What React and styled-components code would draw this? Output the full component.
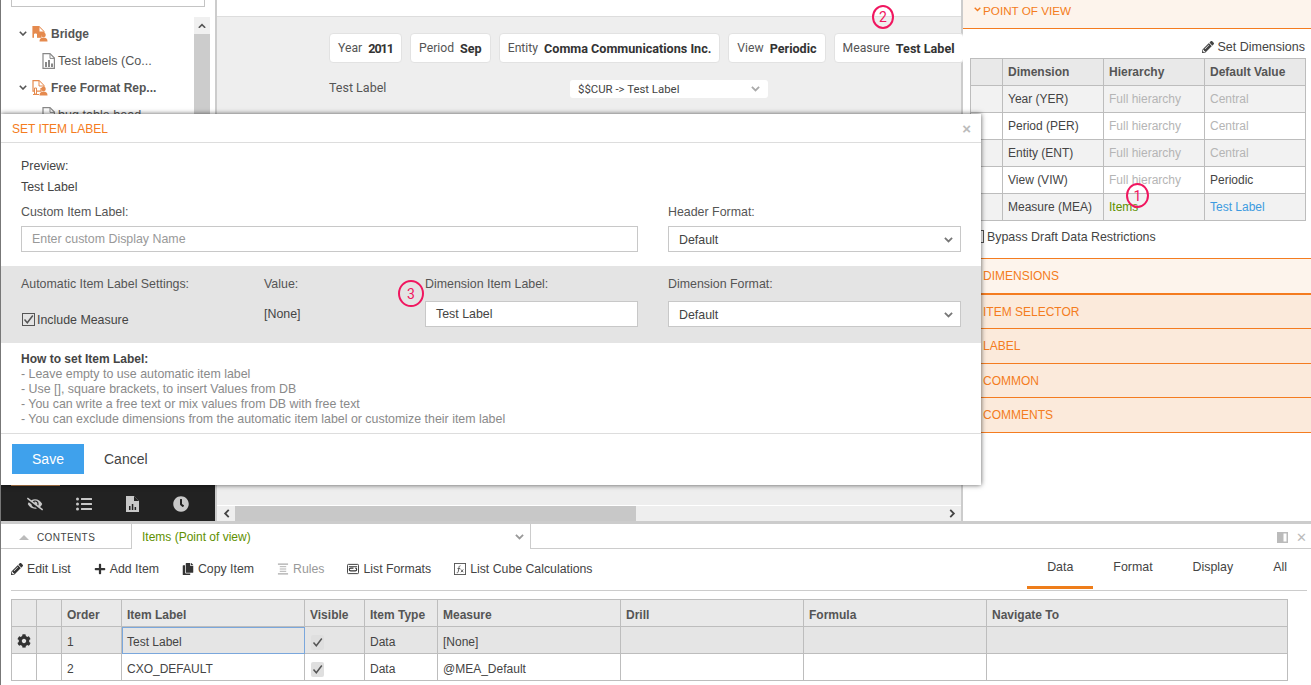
import React from "react";
import styled, { createGlobalStyle } from "styled-components";
import {
    FaPencilAlt,
    FaPlus,
    FaCopy,
    FaCog,
    FaEyeSlash,
    FaListUl,
    FaClock,
} from "react-icons/fa";

/* theme tokens */
const orange = "#f47c20";
const line = "#bdbdbd";
const ink = "#444";
const sans = `"Liberation Sans", Arial, sans-serif`;

const Global = createGlobalStyle`
    html, body {
        margin: 0;
        padding: 0;
        height: 100%;
        overflow: hidden;
        background: #fff;
    }
    * { box-sizing: border-box; }
    body {
        font-family: ${sans};
        font-size: 12.4px;
        color: ${ink};
    }
`;

const Page = styled.div`
    position: relative;
    width: 1311px;
    height: 685px;
    overflow: hidden;
    border-left: 1px solid #777;
    display: flex;
    flex-direction: column;
`;

const TopArea = styled.div`
    display: grid;
    grid-template-columns: 216px 746px 1fr;
    height: 521px;
`;

/* left tree */
const Sidebar = styled.aside`
    display: flex;
    flex-direction: column;
    border-right: 2px solid #ccc;
    background: #fff;
`;

const SearchBox = styled.div`
    height: 7px;
    margin: 0 10px 13px 10px;
    width: 194px;
    border: 1px solid #c4c4c4;
    border-top: none;
`;

const TreeWrap = styled.div`
    flex: 1;
    display: grid;
    grid-template-columns: 1fr 16px;
    padding-right: 5px;
    min-height: 0;
`;

const Tree = styled.div`
    display: flex;
    flex-direction: column;
`;

const TreeRow = styled.div`
    height: 27px;
    display: flex;
    align-items: center;
    gap: 3px;
    padding-left: ${(p) => (p.$child ? "41px" : "15px")};
    font-size: ${(p) => (p.$child ? "12.6px" : "12px")};
    font-weight: ${(p) => (p.$child ? 400 : 700)};
    color: #555;
    white-space: nowrap;
`;

const Caret = styled.span`
    width: 13px;
    display: inline-flex;
    justify-content: center;
`;

const VScroll = styled.div`
    display: flex;
    flex-direction: column;
    background: #ccc;
    margin-top: -3px;
`;

const ScrollBtn = styled.div`
    height: 17px;
    background: #f0f0f0;
    display: flex;
    align-items: center;
    justify-content: center;
`;

const IconBar = styled.div`
    height: 37px;
    background: #222;
    display: grid;
    grid-template-columns: repeat(4, 48.5px);
    padding-left: 10px;
    align-items: center;
    color: #c8c8c8;
    font-size: 16px;
    margin-bottom: -1px;
`;

const IconCell = styled.div`
    height: 100%;
    display: flex;
    align-items: center;
    justify-content: center;
    border-top: 1px solid ${(p) => (p.$active ? "#c98a52" : "transparent")};
`;

/* center canvas */
const Canvas = styled.main`
    display: flex;
    flex-direction: column;
    background: #eee;
    border-right: 2px solid #ccc;
    font-family: Roboto, sans-serif;
`;

const CanvasTop = styled.div`
    height: 17px;
    background: #fff;
    border-bottom: 1px solid #ddd;
`;

const Chips = styled.div`
    display: flex;
    gap: 8px;
    padding: 16px 0 0 112px;
`;

const Chip = styled.div`
    height: 30px;
    padding: 0 8px 0 8px;
    display: flex;
    flex: none;
    align-items: center;
    gap: 6px;
    background: #fff;
    border: 1px solid #e2e2e2;
    border-radius: 4px;
    font-size: 12.2px;
    color: #555;
    white-space: nowrap;
    b {
        font-weight: 700;
        font-size: 12.6px;
        color: #333;
        letter-spacing: ${(p) => (p.$tight ? "-1px" : "0")};
    }
`;

const SelectRow = styled.div`
    display: grid;
    grid-template-columns: 241px 198px;
    padding: 17px 0 0 112px;
    flex: 1;
    align-content: start;
    font-size: 12.5px;
    color: #555;
`;

const MiniSelect = styled.div`
    height: 18px;
    background: #fff;
    border-radius: 3px;
    padding: 0 8px 0 8px;
    display: flex;
    align-items: center;
    justify-content: space-between;
    font-size: 11.4px;
    color: #444;
`;

const HScroll = styled.div`
    height: 16px;
    margin-top: 2px;
    border-top: 1px solid #fff;
    display: grid;
    grid-template-columns: 18px 401px 1fr 18px;
    align-items: center;
    justify-items: center;
`;

const Thumb = styled.div`
    width: 100%;
    height: 100%;
    background: #c8c8c8;
`;

/* right properties */
const Props = styled.aside`
    display: flex;
    flex-direction: column;
    background: #fff;
`;

const PanelHead = styled.div`
    height: 29px;
    padding: 3px 0 0 11px;
    display: flex;
    align-items: flex-start;
    gap: 2px;
    background: #fdf4ec;
    border-bottom: 1px solid ${orange};
    color: ${orange};
    font-size: 11.7px;
    line-height: 15px;
    svg {
        margin-top: 4px;
    }
`;

const SetDims = styled.div`
    display: flex;
    justify-content: flex-end;
    align-items: center;
    gap: 3px;
    height: 15px;
    margin-top: 10px;
    padding-right: 6px;
    font-size: 12.5px;
    color: #444;
    svg {
        font-size: 12px;
    }
`;

const PovTable = styled.table`
    border-collapse: collapse;
    table-layout: fixed;
    width: 335px;
    margin: 4px 0 0 7px;
    td,
    th {
        height: 27px;
        border: 1px solid ${line};
        padding: 0 0 0 5px;
        text-align: left;
        font-size: 12px;
        font-weight: 400;
        white-space: nowrap;
    }
    th {
        background: #e9e9e9;
        font-weight: 700;
        color: #555;
    }
    tbody tr:nth-child(odd) td {
        background: #f2f2f2;
    }
`;

const Muted = styled.span`
    color: ${(p) => p.$color || "#b5b5b5"};
`;

const Bypass = styled.label`
    display: flex;
    align-items: center;
    gap: 3px;
    margin: 8px 0 14px 8px;
    height: 15px;
`;

const CheckBox = styled.span`
    width: 13px;
    height: 13px;
    flex: none;
    border: 1px solid #555;
    background: ${(p) => p.$bg || "#fff"};
    display: inline-flex;
    align-items: center;
    justify-content: center;
    color: #555;
`;

const Accordion = styled.div`
    height: ${(p) => p.$h}px;
    padding-left: 20px;
    display: flex;
    align-items: center;
    font-size: 12px;
    background: ${(p) => (p.$light ? "#fdf4ec" : "#fbeadb")};
    border-top: ${(p) => (p.$first ? `1px solid ${orange}` : "none")};
    border-bottom: ${(p) => (p.$thick ? 2 : 1)}px solid ${orange};
    color: ${orange};
`;

/* bottom list */
const Splitter = styled.div`
    height: 3px;
    background: #ccc;
`;

const Tabs = styled.div`
    height: 25px;
    display: flex;
    border-bottom: 1px solid #ccc;
`;

const ContentsTab = styled.div`
    width: 131px;
    height: 25px;
    padding: 2px 0 0 18px;
    display: flex;
    align-items: center;
    gap: 8px;
    font-size: 10px;
    letter-spacing: 0.4px;
    color: #444;
    border-right: 1px solid #ccc;
    border-bottom: 1px solid #ccc;
`;

const Triangle = styled.span`
    width: 0;
    height: 0;
    border-left: 5px solid transparent;
    border-right: 5px solid transparent;
    border-bottom: 5px solid #bbb;
`;

const ItemsTab = styled.div`
    width: 399px;
    height: 25px;
    padding: 1px 6px 0 10px;
    display: flex;
    align-items: center;
    justify-content: space-between;
    background: #fff;
    color: #5f9000;
    font-size: 12px;
    border-right: 1px solid #ccc;
`;

const TabTools = styled.div`
    margin-left: auto;
    display: flex;
    align-items: center;
    gap: 8px;
    padding: 3px 4px 0 0;
    color: #bbb;
    font-size: 13px;
`;

const Toolbar = styled.div`
    height: 42px;
    margin: 0 4px 0 10px;
    display: flex;
    justify-content: space-between;
    border-bottom: 1px solid #ccc;
`;

const Tools = styled.div`
    display: flex;
    align-items: center;
    gap: 23px;
    padding-bottom: 2px;
`;

const Tool = styled.div`
    display: flex;
    align-items: center;
    gap: 4px;
    font-size: 12.3px;
    color: ${(p) => (p.$disabled ? "#999" : "#444")};
    white-space: nowrap;
    svg {
        width: 12px;
        height: 12px;
        color: ${(p) => (p.$disabled ? "#aaa" : "#333")};
    }
`;

const ViewTabs = styled.div`
    display: flex;
    height: 41px;
`;

const ViewTab = styled.div`
    padding: 0 20px 2px 20px;
    display: flex;
    align-items: center;
    color: #444;
    border-bottom: 3px solid ${(p) => (p.$active ? "#ee7d1a" : "transparent")};
    margin-bottom: 1px;
`;

const ItemsTable = styled.table`
    border-collapse: collapse;
    table-layout: fixed;
    width: 1276px;
    margin: 8px 0 0 10px;
    th,
    td {
        height: 27px;
        border: 1px solid ${line};
        padding: 4px 0 0 5px;
        text-align: left;
        font-size: 12px;
        font-weight: 400;
        white-space: nowrap;
    }
    th {
        background: #e9e9e9;
        color: #555;
        font-weight: 700;
    }
    tbody tr:first-child td {
        background: #e5e5e5;
    }
`;

const Focused = styled.td`
    && {
        outline: 1px solid #7aa7dc;
        outline-offset: -1px;
    }
`;

const GreyTick = styled.span`
    width: 13px;
    height: 15px;
    margin-left: 1px;
    display: inline-flex;
    align-items: center;
    justify-content: center;
    background: #dfdfdf;
    border-radius: 2px;
    vertical-align: middle;
`;

/* modal */
const Modal = styled.section`
    position: absolute;
    z-index: 5;
    left: 0;
    top: 114px;
    width: 980px;
    height: 371px;
    background: #fff;
    box-shadow: 0 0 5px rgba(0, 0, 0, 0.65);
    display: flex;
    flex-direction: column;
`;

const ModalHead = styled.header`
    height: 29px;
    padding: 1px 10px 0 11px;
    display: flex;
    align-items: center;
    justify-content: space-between;
    border-bottom: 1px solid #ddd;
    font-size: 12px;
    color: ${orange};
`;

const CloseX = styled.span`
    color: #bbb;
    font-size: 15px;
    font-weight: 700;
`;

const Preview = styled.div`
    padding: 16px 20px 0;
    display: flex;
    flex-direction: column;
    gap: 6px;
    line-height: 15px;
`;

const FormRow = styled.div`
    display: grid;
    grid-template-columns: 617px 293px;
    column-gap: 30px;
    padding: ${(p) => (p.$band ? "11px 20px 16px" : "10px 20px 14px")};
    background: ${(p) => (p.$band ? "#e4e4e4" : "transparent")};
`;

const BandCols = styled.div`
    display: grid;
    grid-template-columns: 243px 161px 213px;
`;

const Field = styled.div`
    display: flex;
    flex-direction: column;
`;

const Label = styled.div`
    height: 15px;
    line-height: 15px;
    margin-bottom: ${(p) => p.$gap ?? 6}px;
    color: #555;
`;

const Input = styled.div`
    height: 26px;
    border: 1px solid #c8c8c8;
    background: #fff;
    padding-left: 10px;
    display: flex;
    align-items: center;
    color: ${(p) => (p.$placeholder ? "#999" : "#444")};
`;

const Select = styled(Input)`
    justify-content: space-between;
    padding: 2px 7px 0 10px;
`;

const IncludeRow = styled.div`
    display: flex;
    align-items: center;
    gap: 2px;
    height: 15px;
    margin: 20px 0 0 1px;
`;

const PlainValue = styled.div`
    height: 15px;
    line-height: 15px;
    margin-top: 15px;
`;

const Help = styled.div`
    flex: 1;
    padding: 9px 20px 0;
    line-height: 15px;
    color: #8a8a8a;
    b {
        color: #444;
        font-size: 12px;
    }
`;

const ModalFoot = styled.footer`
    height: 52px;
    border-top: 1px solid #ddd;
    padding: 10px 11px;
    display: flex;
    align-items: flex-start;
    gap: 20px;
`;

const SaveBtn = styled.button`
    width: 72px;
    height: 30px;
    border: none;
    background: #3fa1ec;
    color: #fff;
    font: 14px ${sans};
`;

const CancelBtn = styled.button`
    height: 30px;
    border: none;
    padding: 0;
    background: transparent;
    color: #444;
    font: 14px ${sans};
`;

/* numbered call-outs lying over the screen */
const Callout = styled.span`
    position: absolute;
    z-index: 6;
    left: ${(p) => p.$x}px;
    top: ${(p) => p.$y}px;
    width: ${(p) => p.$w}px;
    height: ${(p) => p.$h}px;
    border: 2px solid #f0165f;
    border-radius: 50%;
    display: flex;
    align-items: center;
    justify-content: center;
    color: #f0165f;
    font: 14px Roboto, sans-serif;
`;

const Chevron = ({ size = 8, color = "#666", up }) => (
    <svg width={size} height={size * 0.7} viewBox="0 0 10 7">
        <path
            d={up ? "M1 6l4-4 4 4" : "M1 1l4 4 4-4"}
            fill="none"
            stroke={color}
            strokeWidth="2"
        />
    </svg>
);

const SideArrow = ({ left }) => (
    <svg width="7" height="9" viewBox="0 0 7 10">
        <path
            d={left ? "M6 1L2 5l4 4" : "M1 1l4 4-4 4"}
            fill="none"
            stroke="#444"
            strokeWidth="2"
        />
    </svg>
);

const Tick = () => (
    <svg width="11" height="11" viewBox="0 0 11 11">
        <path d="M1.500 5.500l2.800 3.200L9.800 1.500" fill="none" stroke="#555" strokeWidth="1.500" />
    </svg>
);

const ReportIcon = ({ solid }) => (
    <svg width="16" height="16" viewBox="0 0 16 16">
        <path
            d="M1 .7h6l5 5v3H9v2.500H1z"
            fill={solid ? "#e58a4e" : "none"}
            stroke="#e58a4e"
            strokeWidth="1.200"
        />
        <path d="M7 1v5h5" fill="#fff" stroke="#e58a4e" />
        <path
            d="M2.500 8h2v6h-2zM1 14.500h6"
            fill="#fff"
            stroke={solid ? "#fff" : "#e58a4e"}
        />
        <circle cx="11.500" cy="9" r="2.300" fill="#e58a4e" />
        <path d="M7.500 15.500c0-3 1.600-4 4-4s4 1 4 4z" fill="#e58a4e" />
    </svg>
);

const DocIcon = () => (
    <svg width="13" height="16" viewBox="0 0 13 16">
        <path d="M1 .6h7l4.400 4.400v10.400H1z" fill="#fff" stroke="#888" strokeWidth="1.200" />
        <path d="M8 1v4.400h4" fill="none" stroke="#888" />
        <path d="M3 9h2v5H3zM6 7h2v7H6zM9 10.500h2V14H9z" fill="#888" />
    </svg>
);

const BarDoc = () => (
    <svg width="13" height="16" viewBox="0 0 13 16">
        <path d="M0 0h8l5 5v11H0z" fill="#c8c8c8" />
        <path d="M8 0v5h5z" fill="#222" />
        <path d="M3 10h1.500v4H3zM5.800 8h1.500v6H5.800zM8.600 11h1.500v3H8.600z" fill="#222" />
    </svg>
);

const RulesIcon = () => (
    <svg viewBox="0 0 13 12" fill="none" stroke="#aaa">
        <path d="M1 .7h11M1 11.300h11" strokeWidth="1.400" />
        <path d="M3 3.500h7M3 6h7M3 8.500h7" />
    </svg>
);

const FormatsIcon = () => (
    <svg viewBox="0 0 13 11" fill="none" stroke="#333">
        <rect x=".5" y=".5" width="12" height="10" rx="1" />
        <path d="M2 3h9" />
        <path d="M7 4.500H4a1.500 1.500 0 000 3h5a1.500 1.500 0 000-3" strokeWidth="1.200" />
    </svg>
);

const FxIcon = () => (
    <svg viewBox="0 0 13 13" fill="none" stroke="#555">
        <rect x=".5" y=".5" width="12" height="12" />
        <path d="M7 3C5.500 3 5.500 4 5.200 6L4.600 9.500C4.400 10.500 3.800 10.500 3 10.500M3.800 6h3M7.500 7l2.500 3M10 7l-2.500 3" />
    </svg>
);

const PanelIcon = () => (
    <svg width="11" height="11" viewBox="0 0 11 11">
        <rect width="11" height="11" fill="#bbb" />
        <rect x="6.500" y="1.500" width="3" height="8" fill="#fff" />
    </svg>
);

const povRows = [
    ["Year (YER)", "Central"],
    ["Period (PER)", "Central"],
    ["Entity (ENT)", "Central"],
    ["View (VIW)", "Periodic"],
];

const tools = [
    { label: "Edit List", icon: <FaPencilAlt /> },
    { label: "Add Item", icon: <FaPlus /> },
    { label: "Copy Item", icon: <FaCopy /> },
    { label: "Rules", icon: <RulesIcon />, disabled: true },
    { label: "List Formats", icon: <FormatsIcon /> },
    { label: "List Cube Calculations", icon: <FxIcon /> },
];

const itemCols = [25, 25, 60, 183, 60, 73, 183, 183, 183, 301];

export default function App() {
    return (
        <Page>
            <Global />
            <TopArea>
                <Sidebar>
                    <SearchBox />
                    <TreeWrap>
                        <Tree>
                            <TreeRow>
                                <Caret><Chevron color="#555" /></Caret>
                                <ReportIcon solid />
                                Bridge
                            </TreeRow>
                            <TreeRow $child>
                                <DocIcon />
                                Test labels (Co...
                            </TreeRow>
                            <TreeRow>
                                <Caret><Chevron color="#555" /></Caret>
                                <ReportIcon />
                                Free Format Rep...
                            </TreeRow>
                            <TreeRow $child>
                                <DocIcon />
                                bug table head
                            </TreeRow>
                        </Tree>
                        <VScroll>
                            <ScrollBtn><Chevron color="#555" up /></ScrollBtn>
                        </VScroll>
                    </TreeWrap>
                    <IconBar>
                        <IconCell $active><FaEyeSlash /></IconCell>
                        <IconCell><FaListUl /></IconCell>
                        <IconCell><BarDoc /></IconCell>
                        <IconCell><FaClock /></IconCell>
                    </IconBar>
                </Sidebar>

                <Canvas>
                    <CanvasTop />
                    <Chips>
                        <Chip $tight>Year <b>2011</b></Chip>
                        <Chip>Period <b>Sep</b></Chip>
                        <Chip>Entity <b>Comma Communications Inc.</b></Chip>
                        <Chip>View <b>Periodic</b></Chip>
                        <Chip>Measure <b>Test Label</b></Chip>
                    </Chips>
                    <SelectRow>
                        <span>Test Label</span>
                        <MiniSelect>
                            $$CUR -&gt; Test Label
                            <Chevron size={9} color="#aaa" />
                        </MiniSelect>
                    </SelectRow>
                    <HScroll>
                        <SideArrow left />
                        <Thumb />
                        <span />
                        <SideArrow />
                    </HScroll>
                </Canvas>

                <Props>
                    <PanelHead>
                        <Chevron size={7} color={orange} />
                        POINT OF VIEW
                    </PanelHead>
                    <SetDims>
                        <FaPencilAlt />
                        Set Dimensions
                    </SetDims>
                    <PovTable>
                        <colgroup>
                            <col width="32" />
                            <col width="101" />
                            <col width="101" />
                            <col width="101" />
                        </colgroup>
                        <thead>
                            <tr>
                                <th />
                                <th>Dimension</th>
                                <th>Hierarchy</th>
                                <th>Default Value</th>
                            </tr>
                        </thead>
                        <tbody>
                            {povRows.map(([dim, value]) => (
                                <tr key={dim}>
                                    <td />
                                    <td>{dim}</td>
                                    <td><Muted>Full hierarchy</Muted></td>
                                    <td>
                                        <Muted $color={value === "Central" ? undefined : "#444"}>
                                            {value}
                                        </Muted>
                                    </td>
                                </tr>
                            ))}
                            <tr>
                                <td />
                                <td>Measure (MEA)</td>
                                <td><Muted $color="#5f9000">Items</Muted></td>
                                <td><Muted $color="#3d9be0">Test Label</Muted></td>
                            </tr>
                        </tbody>
                    </PovTable>
                    <Bypass>
                        <CheckBox />
                        Bypass Draft Data Restrictions
                    </Bypass>
                    <Accordion $first $light $thick $h={37}>DIMENSIONS</Accordion>
                    <Accordion $h={34}>ITEM SELECTOR</Accordion>
                    <Accordion $h={35}>LABEL</Accordion>
                    <Accordion $h={34}>COMMON</Accordion>
                    <Accordion $h={35}>COMMENTS</Accordion>
                </Props>
            </TopArea>

            <Splitter />

            <Tabs>
                <ContentsTab>
                    <Triangle />
                    CONTENTS
                </ContentsTab>
                <ItemsTab>
                    Items (Point of view)
                    <Chevron size={9} color="#999" />
                </ItemsTab>
                <TabTools>
                    <PanelIcon />
                    ✕
                </TabTools>
            </Tabs>

            <Toolbar>
                <Tools>
                    {tools.map((t) => (
                        <Tool key={t.label} $disabled={t.disabled}>
                            {t.icon}
                            {t.label}
                        </Tool>
                    ))}
                </Tools>
                <ViewTabs>
                    <ViewTab $active>Data</ViewTab>
                    <ViewTab>Format</ViewTab>
                    <ViewTab>Display</ViewTab>
                    <ViewTab>All</ViewTab>
                </ViewTabs>
            </Toolbar>

            <ItemsTable>
                <colgroup>
                    {itemCols.map((w, i) => (
                        <col key={i} width={w} />
                    ))}
                </colgroup>
                <thead>
                    <tr>
                        <th />
                        <th />
                        <th>Order</th>
                        <th>Item Label</th>
                        <th>Visible</th>
                        <th>Item Type</th>
                        <th>Measure</th>
                        <th>Drill</th>
                        <th>Formula</th>
                        <th>Navigate To</th>
                    </tr>
                </thead>
                <tbody>
                    <tr>
                        <td><FaCog size={14} color="#333" /></td>
                        <td />
                        <td>1</td>
                        <Focused>Test Label</Focused>
                        <td><GreyTick><Tick /></GreyTick></td>
                        <td>Data</td>
                        <td>[None]</td>
                        <td />
                        <td />
                        <td />
                    </tr>
                    <tr>
                        <td />
                        <td />
                        <td>2</td>
                        <td>CXO_DEFAULT</td>
                        <td><GreyTick><Tick /></GreyTick></td>
                        <td>Data</td>
                        <td>@MEA_Default</td>
                        <td />
                        <td />
                        <td />
                    </tr>
                </tbody>
            </ItemsTable>

            <Modal>
                <ModalHead>
                    SET ITEM LABEL
                    <CloseX>×</CloseX>
                </ModalHead>
                <Preview>
                    <span>Preview:</span>
                    <span>Test Label</span>
                </Preview>
                <FormRow>
                    <Field>
                        <Label>Custom Item Label:</Label>
                        <Input $placeholder>Enter custom Display Name</Input>
                    </Field>
                    <Field>
                        <Label>Header Format:</Label>
                        <Select>
                            Default
                            <Chevron size={9} color="#777" />
                        </Select>
                    </Field>
                </FormRow>
                <FormRow $band>
                    <BandCols>
                        <Field>
                            <Label $gap={0}>Automatic Item Label Settings:</Label>
                            <IncludeRow>
                                <CheckBox $bg="transparent"><Tick /></CheckBox>
                                Include Measure
                            </IncludeRow>
                        </Field>
                        <Field>
                            <Label $gap={0}>Value:</Label>
                            <PlainValue>[None]</PlainValue>
                        </Field>
                        <Field>
                            <Label $gap={9}>Dimension Item Label:</Label>
                            <Input>Test Label</Input>
                        </Field>
                    </BandCols>
                    <Field>
                        <Label $gap={9}>Dimension Format:</Label>
                        <Select>
                            Default
                            <Chevron size={9} color="#777" />
                        </Select>
                    </Field>
                </FormRow>
                <Help>
                    <b>How to set Item Label:</b>
                    <br />- Leave empty to use automatic item label
                    <br />- Use [], square brackets, to insert Values from DB
                    <br />- You can write a free text or mix values from DB with free text
                    <br />- You can exclude dimensions from the automatic item label or customize their item label
                </Help>
                <ModalFoot>
                    <SaveBtn>Save</SaveBtn>
                    <CancelBtn>Cancel</CancelBtn>
                </ModalFoot>
            </Modal>

            <Callout $x={1125} $y={183} $w={23} $h={25}>1</Callout>
            <Callout $x={871} $y={5} $w={22} $h={24}>2</Callout>
            <Callout $x={397} $y={280} $w={26} $h={27}>3</Callout>
        </Page>
    );
}
